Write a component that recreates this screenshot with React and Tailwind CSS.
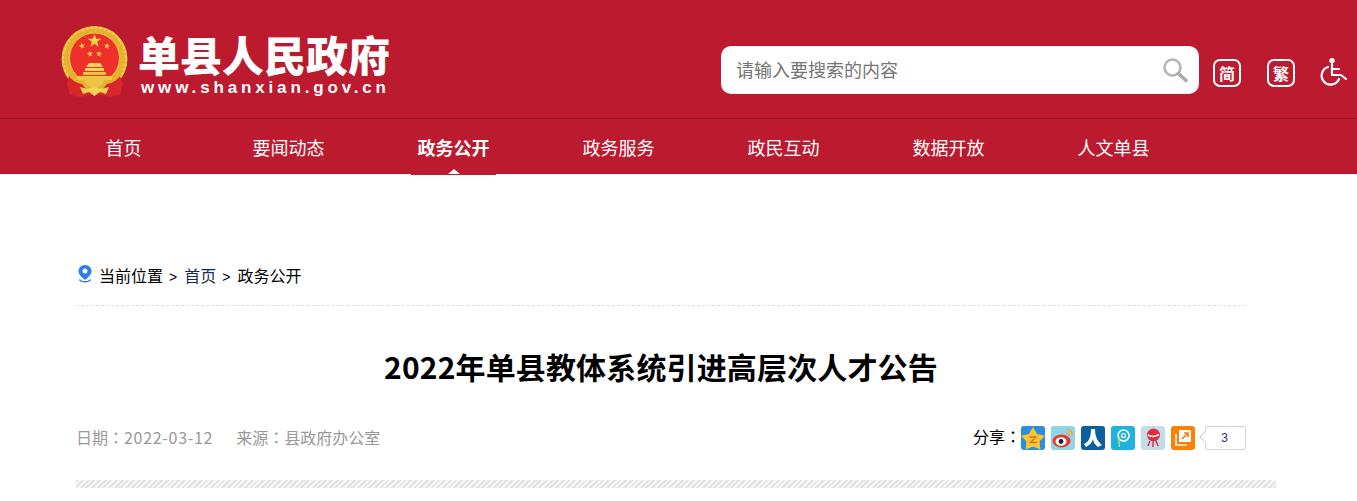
import React from "react";

const cjk = "font-['Noto_Sans_CJK_SC','Noto_Sans',sans-serif]";
const cjkTc = "font-['Noto_Sans_CJK_TC','Noto_Sans',sans-serif]";

const navItems = ["首页", "要闻动态", "政务公开", "政务服务", "政民互动", "数据开放", "人文单县"];

// five pointed star, used on the emblem and the qzone icon
const starPoints = (cx, cy, r, rot = 0, inner = 0.4) => {
  const pts = [];
  for (let i = 0; i < 10; i++) {
    const rad = i % 2 === 0 ? r : r * inner;
    const a = ((-90 + rot + i * 36) * Math.PI) / 180;
    pts.push(`${(cx + rad * Math.cos(a)).toFixed(2)},${(cy + rad * Math.sin(a)).toFixed(2)}`);
  }
  return pts.join(" ");
};

const Emblem = () => (
  <svg width="70" height="72" viewBox="0 0 70 72" className="shrink-0">
    <circle cx="34.5" cy="33" r="33" fill="#e6b22e" />
    <circle cx="34.5" cy="33" r="31.5" fill="none" stroke="#f5d25a" strokeWidth="2" strokeDasharray="3 1.5" />
    <circle cx="34.5" cy="32" r="25" fill="#ee2f2a" />
    <circle cx="34.5" cy="32" r="25" fill="none" stroke="#f2c63f" strokeWidth="1" />
    <polygon points={starPoints(34.5, 15, 7)} fill="#f8d54a" />
    <polygon points={starPoints(22, 20, 3.2, -15)} fill="#f8d54a" />
    <polygon points={starPoints(47, 20, 3.2, 15)} fill="#f8d54a" />
    <polygon points={starPoints(30, 28, 3.2, -10)} fill="#f8d54a" />
    <polygon points={starPoints(39, 28, 3.2, 10)} fill="#f8d54a" />
    <path d="M29 37 H40 L43 41 H26 Z M25 42 H44 V45 H25 Z" fill="#f6d55e" />
    <path d="M23 46 H46 V49 H23 Z" fill="#eec443" />
    <path d="M17 50 H52 V54 H17 Z" fill="#f0c848" />
    <path d="M9 50 C12 54 16 57 22 58 L27 64 L33 63 L34.5 70 L36 63 L42 64 L47 58 C53 57 57 54 60 50 L63 58 L60 69 L50 71 L35 68 L20 71 L10 69 L7 58 Z" fill="#d9262a" />
    <path d="M24 53 C28 50 31 54 34.5 51 C38 54 41 50 45 53 L42 59 L34.5 62 L27 59 Z" fill="#edc445" />
    <path d="M20 61 L28 63 L34.5 60 L41 63 L49 61 L46 68 L40 66 L34.5 70 L29 66 L23 68 Z" fill="#f3d055" />
  </svg>
);

const Header = () => (
  <div className="flex h-[118px] items-start bg-[#bb1a2f] pl-[60px]">
    <div className="mt-[26px]">
      <Emblem />
    </div>
    <div className="ml-[8px] mt-[29px] w-[261px] text-white">
      <div className={`${cjk} h-[50px] text-[42px] font-black leading-[50px] whitespace-nowrap`}>单县人民政府</div>
      <div className="ml-[3px] mt-[-1px] font-['Liberation_Sans',sans-serif] text-[17px] font-bold leading-[20px] tracking-[3.85px] whitespace-nowrap">
        www.shanxian.gov.cn
      </div>
    </div>
    <div className="ml-[322px] mt-[46px] flex h-12 w-[478px] items-center justify-between rounded-[10px] bg-white pl-[15px] pr-[11px]">
      <span className={`${cjk} mt-[-2px] text-lg text-[#757575]`}>请输入要搜索的内容</span>
      <svg width="26" height="26" viewBox="0 0 26 26" fill="none">
        <circle cx="10.5" cy="10.5" r="8" stroke="#b4b4b4" strokeWidth="2.5" />
        <path d="M16.5 16.5 L24 23.5" stroke="#a8a8a8" strokeWidth="3.5" strokeLinecap="round" />
      </svg>
    </div>
    <div className={`${cjk} ml-[14px] mt-[59px] flex h-7 w-7 items-center justify-center rounded-[7px] border-2 border-white text-base font-bold leading-none text-white`}>
      简
    </div>
    <div className={`${cjk} ml-[26px] mt-[59px] flex h-7 w-7 items-center justify-center rounded-[7px] border-2 border-white text-base font-bold leading-none text-white`}>
      繁
    </div>
    <svg width="28" height="30" viewBox="0 0 28 30" fill="none" className="ml-[24px] mt-[57px] shrink-0">
      <circle cx="13" cy="3.6" r="2.7" fill="white" />
      <path d="M13 7 V18 H22 L27 22" stroke="white" strokeWidth="2.2" strokeLinecap="round" strokeLinejoin="round" />
      <path d="M13 12 H20" stroke="white" strokeWidth="2.2" strokeLinecap="round" />
      <path d="M9 10 A9 9 0 1 0 20 22" stroke="white" strokeWidth="2.2" strokeLinecap="round" />
    </svg>
  </div>
);

const Nav = () => (
  <div className="h-[56px] border-t border-[#9c1428] bg-[#bb1a2f]">
    <div className="flex pl-[41px]">
      {navItems.map((item, i) => (
        <div key={item} className="relative flex h-[55px] w-[165px] justify-center">
          <span className={`${cjk} text-lg leading-[56px] text-white ${i === 2 ? "font-bold" : ""}`}>{item}</span>
          {i === 2 && (
            <div className="absolute left-[40px] top-[50px] flex h-[6px] w-[85px] items-start justify-center bg-[#bb1a2f]">
              <div className="h-0 w-0 border-x-[6px] border-b-[5px] border-x-transparent border-b-white" />
            </div>
          )}
        </div>
      ))}
    </div>
  </div>
);

const ShareIcon = ({ className, children }) => (
  <div className={`h-6 w-6 overflow-hidden rounded-[3px] ${className}`}>
    <svg width="24" height="24" viewBox="0 0 24 24" fill="none">
      {children}
    </svg>
  </div>
);

const ShareIcons = () => (
  <div className="flex gap-1.5">
    <ShareIcon className="bg-[#2a8fdc]">
      <polygon points={starPoints(12, 13.5, 12.5, 0, 0.55)} fill="#fbc62f" />
      <path d="M8.5 11 H15 L9.5 16.5 H16" stroke="#d9722a" strokeWidth="1.4" />
    </ShareIcon>
    <ShareIcon className="bg-[#8fd5e8]">
      <ellipse cx="10.5" cy="15" rx="9" ry="6.5" fill="#e8382c" />
      <ellipse cx="10" cy="15.5" rx="5.5" ry="4.2" fill="white" />
      <circle cx="10" cy="15.5" r="2.4" fill="#222" />
      <path d="M15 3.5 A6.5 6.5 0 0 1 21.5 10" stroke="#f2a72c" strokeWidth="1.6" />
      <path d="M15 7 A3 3 0 0 1 18 10" stroke="#f2a72c" strokeWidth="1.3" />
    </ShareIcon>
    <ShareIcon className="bg-[#0a5f9e]">
      <path d="M10 3 H14 C14 11 17 16 21 19 L17 21 C14 19 12.5 16 12 13 C11.5 16 9 19 5 21 L3 18 C8 16 10 11 10 3 Z" fill="white" />
    </ShareIcon>
    <ShareIcon className="bg-[#1fb3dc]">
      <circle cx="12.5" cy="9.5" r="5.5" stroke="white" strokeWidth="1.6" />
      <circle cx="12.5" cy="9.5" r="2" stroke="white" strokeWidth="1.2" />
      <path d="M8 10 C8 14 8 18 8.5 21" stroke="#c9e26a" strokeWidth="1.3" />
    </ShareIcon>
    <ShareIcon className="bg-[#c3dcea]">
      <circle cx="12.5" cy="9" r="6.5" fill="#e32b3c" />
      <path d="M7 9 C10 11 14 11 18 8.5" stroke="white" strokeWidth="1.6" />
      <path d="M9 15 L7 20 M12 15.5 V21 M15 15 L17 20" stroke="#d62a3a" strokeWidth="1.4" />
    </ShareIcon>
    <ShareIcon className="bg-[#ff7f00]">
      <path d="M5 8 V19 H16" stroke="white" strokeWidth="1.6" />
      <rect x="8" y="4" width="12" height="12" fill="white" />
      <path d="M11 13 L17 7 M13 7 H17 V11" stroke="#e8821e" strokeWidth="1.7" />
    </ShareIcon>
    <div className="relative ml-[4px] flex h-6 w-[41px] items-center justify-center rounded-[2px] border border-[#d4d4d4] bg-white pr-[2px] font-['Liberation_Sans',sans-serif] text-xs text-[#333366]">
      3
      <div className="absolute left-[-5px] top-[6px] h-2 w-2 rotate-45 border-b border-l border-[#d4d4d4] bg-white" />
    </div>
  </div>
);

const Article = () => (
  <div className="ml-[76px] w-[1200px] pt-[88px]">
    <div className="w-[1170px]">
      <div className="flex h-[44px] items-start border-b border-dashed border-[#dddddd]">
        <svg width="16" height="20" viewBox="0 0 16 20" className="ml-px mt-[2px] shrink-0">
          <path d="M8 1 C4 1 1.5 4 1.5 7.2 C1.5 10.5 5 13.5 8 16 C11 13.5 14.5 10.5 14.5 7.2 C14.5 4 12 1 8 1 Z" fill="#2f7bf0" />
          <circle cx="8" cy="7" r="2.5" fill="white" />
          <path d="M2.5 15.5 C4 18.5 12 18.5 13.5 15.5" stroke="#2f7bf0" strokeWidth="1.5" fill="none" />
        </svg>
        <div className={`${cjk} ml-[6px] mt-[1px] flex items-baseline text-base leading-[24px] text-black`}>
          <span>当前位置</span>
          <span className="ml-[6px] mr-[7px] font-['Liberation_Sans',sans-serif] text-sm">&gt;</span>
          <span className="text-[#1a2a4a]">首页</span>
          <span className="ml-[6px] mr-[7px] font-['Liberation_Sans',sans-serif] text-sm">&gt;</span>
          <span>政务公开</span>
        </div>
      </div>
      <h1 className={`${cjk} mt-[38px] text-center text-[30px] font-bold leading-[44px] tracking-[0.15px] text-black`}>
        2022年单县教体系统引进高层次人才公告
      </h1>
      <div className="mt-[38px] flex h-6 items-center justify-between">
        <div className={`${cjk} mt-[-2px] text-base leading-[24px] text-[#999999]`}>
          <span>日期</span>
          <span className={cjkTc}>：</span>
          <span className="tracking-[0.7px]">2022-03-12</span>
          <span className="ml-[23px]">来源</span>
          <span className={cjkTc}>：</span>
          <span>县政府办公室</span>
        </div>
        <div className="flex items-center">
          <span className={`${cjk} mt-[-4px] text-base text-black`}>
            分享<span className={cjkTc}>：</span>
          </span>
          <ShareIcons />
        </div>
      </div>
    </div>
    <div className="mt-[30px] h-2 bg-[repeating-linear-gradient(135deg,#e4e4e4_0,#e4e4e4_2px,#f6f6f6_2px,#f6f6f6_4px)]" />
  </div>
);

const App = () => {
  return (
    <div className="min-h-[501px] overflow-hidden bg-white">
      <Header />
      <Nav />
      <Article />
    </div>
  );
};

export default App;
